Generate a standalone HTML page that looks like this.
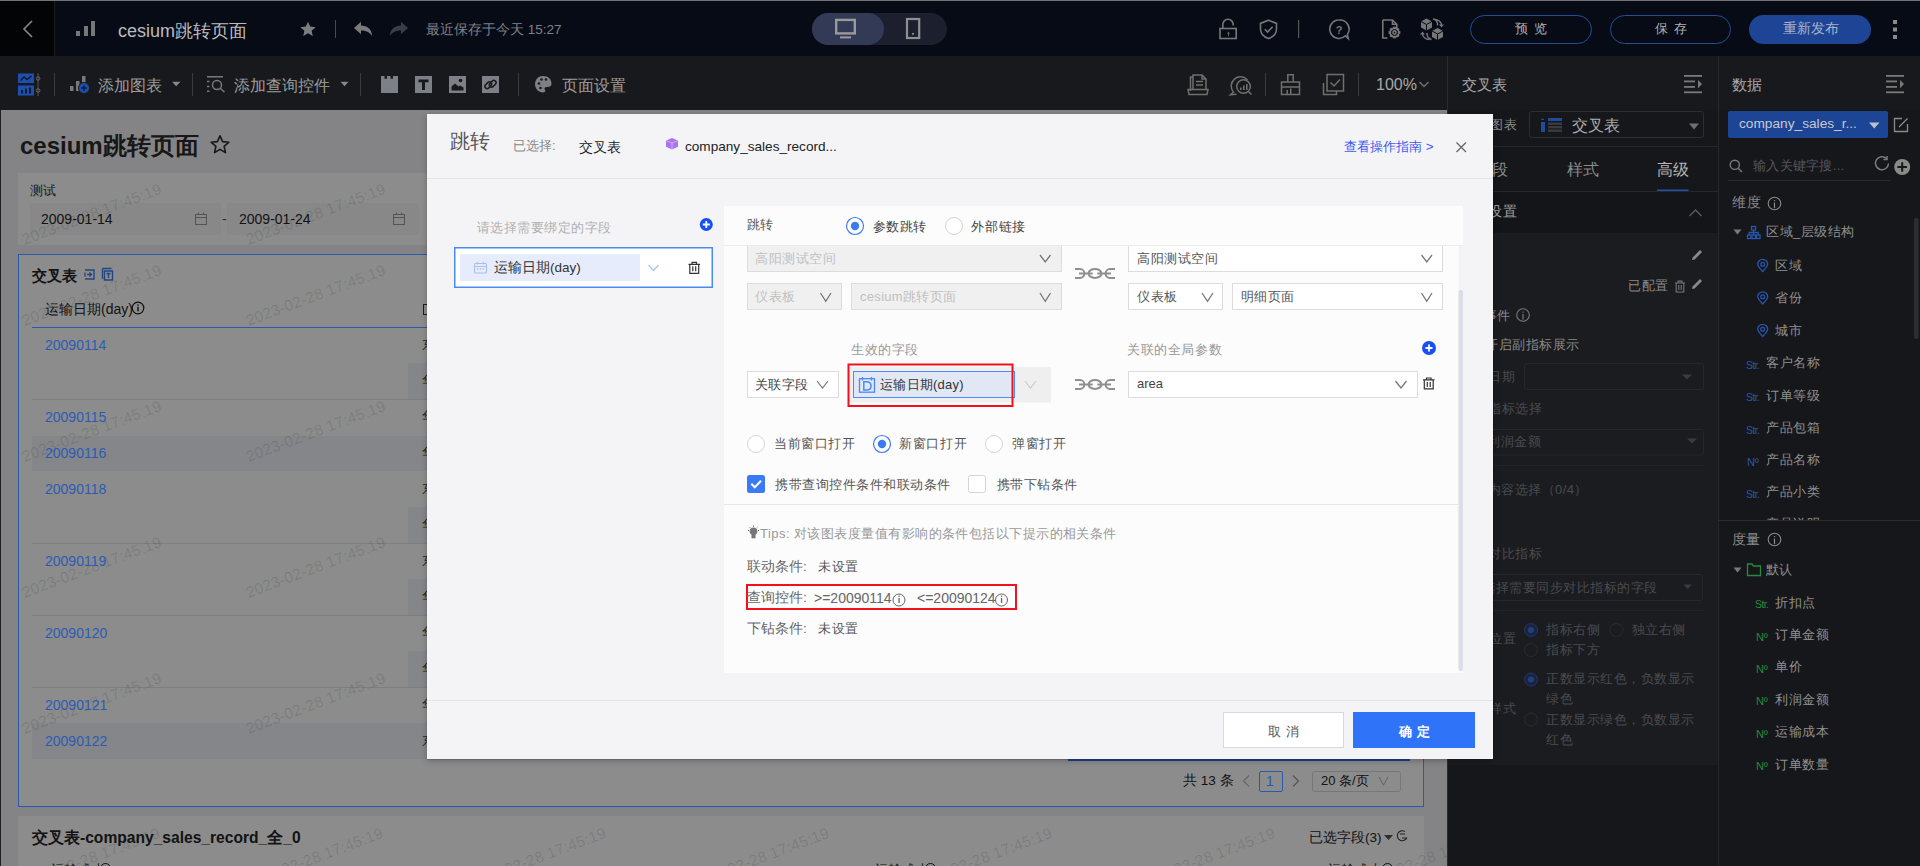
<!DOCTYPE html>
<html><head><meta charset="utf-8">
<style>
*{box-sizing:border-box;margin:0;padding:0}
html,body{width:1920px;height:866px;overflow:hidden;background:#18191c;font-family:"Liberation Sans",sans-serif;font-size:14px}
.a{position:absolute}
.t{position:absolute;white-space:nowrap;line-height:20px}
#hdr{left:0;top:0;width:1920px;height:56px;background:#070b16;border-top:1px solid #737373}
#tb{left:0;top:56px;width:1920px;height:54px;background:#18191c}
#canvas{left:0;top:110px;width:1448px;height:756px;background:#f0f1f4;overflow:hidden}
#mask{left:0;top:110px;width:1448px;height:756px;background:rgba(0,0,0,0.45)}
#p1{left:1447px;top:110px;width:271px;height:756px;background:#16171a;border-left:1px solid #2a2b2f}
#p2{left:1718px;top:110px;width:202px;height:756px;background:#16171a;border-left:1px solid #2a2b2f}
#modal{left:427px;top:114px;width:1066px;height:645px;background:#f4f4f7;box-shadow:0 2px 6px rgba(0,0,0,0.25)}
</style></head><body>
<div id="hdr" class="a">
  <div class="a" style="left:0;top:0;width:55px;height:55px;background:#030406;border-right:1px solid #1e1e1e"></div>
  <svg class="a" style="left:0;top:-1px" width="1920" height="56" viewBox="0 0 1920 56">
    <path d="M32 21 L24 29 L32 37" fill="none" stroke="#8a8a8a" stroke-width="1.6"/>
    <rect x="76" y="31" width="4" height="5" fill="#777"/><rect x="84" y="26" width="4" height="10" fill="#777"/><rect x="91" y="21" width="4" height="15" fill="#777"/>
    <path d="M308 21.8 L310.2 26.6 L315.6 27.2 L311.6 30.8 L312.8 36 L308 33.3 L303.2 36 L304.4 30.8 L300.4 27.2 L305.8 26.6Z" fill="#7d7d7d"/>
    <rect x="335" y="20" width="1" height="18" fill="#4a4a4a"/>
    <path d="M354 28 L361 21.8 L361 25.5 C367 25.5 372 29 372 36 C369.5 32 366 30.5 361 30.5 L361 34.2Z" fill="#7a7a7a"/>
    <path d="M408 28 L401 21.8 L401 25.5 C395 25.5 390 29 390 36 C392.5 32 396 30.5 401 30.5 L401 34.2Z" fill="#3a3d46"/>
    <rect x="812" y="13" width="135" height="32" rx="16" fill="#1b1f2e"/>
    <rect x="812" y="13" width="72" height="32" rx="16" fill="#333a55"/>
    <rect x="836.2" y="19.9" width="18.6" height="13.5" fill="none" stroke="#9a9a9a" stroke-width="2.4"/>
    <rect x="840" y="36.4" width="11" height="2" fill="#9a9a9a"/>
    <rect x="907" y="19" width="12.2" height="19" fill="none" stroke="#8f8f8f" stroke-width="2.2"/>
    <circle cx="913" cy="33.8" r="1.1" fill="#8f8f8f"/>
    <g fill="none" stroke="#777" stroke-width="1.6">
      <rect x="1220" y="28.5" width="16.2" height="10" />
      <path d="M1222.8 28.5 V24.5 a5.2 5.2 0 0 1 10.4 0 V25.5"/>
      <path d="M1268.5 20.2 L1276.5 23.4 V29 C1276.5 34 1273 37 1268.5 38.6 C1264 37 1260.5 34 1260.5 29 V23.4Z"/>
      <path d="M1264.8 29.2 L1267.6 32 L1272.6 26.8"/>
      <path d="M1339 20 a9.2 9.2 0 1 0 6.4 15.8 l2.8 2.6 l-0.8 -4 a9.2 9.2 0 0 0 -8.4 -14.4Z"/>
      <path d="M1382.8 20 H1392.5 L1396.8 24.3 V28 M1392.5 20 V24.3 H1396.8 M1382.8 20 V38 H1387.5"/>
      <circle cx="1394.5" cy="32.5" r="4.4"/><circle cx="1394.5" cy="32.5" r="1.6"/>
      <path d="M1433 18.8 a6 6 0 0 1 4.5 6.5 M1431.5 39.5 a6 6 0 0 1 -4.5 -6.5"/>
    </g>
    <rect x="1236" y="29" width="0.01" height="0.01"/>
    <path d="M1228.5 31.5 l-1.2 2.2 h0.8 v2.5 h0.8 v-2.5 h0.8 z" fill="#777"/>
    <rect x="1298" y="20" width="1.2" height="18" fill="#555"/>
    <text x="1339" y="33.5" font-size="11" font-family="Liberation Sans" fill="#777" text-anchor="middle" font-weight="bold">?</text>
    <path d="M1426.5 18.5 L1432 21.5 V27.5 L1426.5 30.5 L1421 27.5 V21.5Z" fill="#777"/><path d="M1421 21.5 L1426.5 24.5 L1432 21.5 M1426.5 24.5 V30.5" fill="none" stroke="#070b16" stroke-width="1"/><path d="M1437.5 28 L1443 31.0 V37.0 L1437.5 40 L1432 37.0 V31.0Z" fill="#777"/><path d="M1432 31.0 L1437.5 34.0 L1443 31.0 M1437.5 34.0 V40" fill="none" stroke="#070b16" stroke-width="1"/><g fill="none" stroke="#777" stroke-width="1.4"><path d="M1434.5 19.5 C1438.5 19.5 1441.5 22 1441.5 25.5"/><path d="M1429.5 39.5 C1425.5 39.5 1422.5 37 1422.5 33.5"/></g><path d="M1439 24.5 L1441.5 27.5 L1444 24.5Z M1420 34.5 L1422.5 31.5 L1425 34.5Z" fill="#777"/>
    <g fill="#777"><rect x="1393.2" y="26.6" width="2.6" height="2.6" transform="rotate(0 1394.5 32.5)"/><rect x="1393.2" y="26.6" width="2.6" height="2.6" transform="rotate(45 1394.5 32.5)"/><rect x="1393.2" y="26.6" width="2.6" height="2.6" transform="rotate(90 1394.5 32.5)"/><rect x="1393.2" y="26.6" width="2.6" height="2.6" transform="rotate(135 1394.5 32.5)"/><rect x="1393.2" y="26.6" width="2.6" height="2.6" transform="rotate(180 1394.5 32.5)"/><rect x="1393.2" y="26.6" width="2.6" height="2.6" transform="rotate(225 1394.5 32.5)"/><rect x="1393.2" y="26.6" width="2.6" height="2.6" transform="rotate(270 1394.5 32.5)"/><rect x="1393.2" y="26.6" width="2.6" height="2.6" transform="rotate(315 1394.5 32.5)"/></g>
    <rect x="1470.5" y="15.5" width="121" height="28" rx="14" fill="none" stroke="#264b99"/>
    <rect x="1610.5" y="15.5" width="120" height="28" rx="14" fill="none" stroke="#264b99"/>
    <rect x="1749" y="15" width="122" height="29" rx="14.5" fill="#1e4595"/>
    <g fill="#8a8a8a"><rect x="1893" y="20" width="4" height="4"/><rect x="1893" y="27.5" width="4" height="4"/><rect x="1893" y="35" width="4" height="4"/></g>
  </svg>
  <div class="t" style="left:118px;top:19px;font-size:18px;line-height:22px;color:#bcbcbc">cesium跳转页面</div>
  <div class="t" style="left:426px;top:19px;font-size:13.5px;line-height:20px;color:#7f8087">最近保存于今天 15:27</div>
  <div class="t" style="left:1515px;top:18px;font-size:13px;line-height:20px;color:#b0b0b0;letter-spacing:6px">预览</div>
  <div class="t" style="left:1655px;top:18px;font-size:13px;line-height:20px;color:#b0b0b0;letter-spacing:6px">保存</div>
  <div class="t" style="left:1783px;top:18px;font-size:13.5px;line-height:20px;color:#a8b4cc">重新发布</div>
</div>
<div id="tb" class="a">
  <svg class="a" style="left:0;top:-56px" width="1920" height="110" viewBox="0 0 1920 110">
    <rect x="18" y="73.5" width="16" height="9.5" fill="#1f4fae"/>
    <path d="M20.5 80.5 L24 77 L27 79.5 L31.5 76" fill="none" stroke="#0f1a30" stroke-width="1.5"/>
    <rect x="18" y="85.5" width="16" height="10" fill="#1f4fae"/>
    <g fill="#0f1a30"><rect x="21" y="90" width="2" height="3.5"/><rect x="25" y="88.5" width="2" height="5"/><rect x="29" y="87.5" width="2" height="6"/></g>
    <rect x="37.6" y="73" width="1" height="23" fill="#555"/>
    <circle cx="38.1" cy="78.5" r="1.8" fill="none" stroke="#666" stroke-width="1"/>
    <circle cx="38.1" cy="90.5" r="1.8" fill="none" stroke="#666" stroke-width="1"/>
    <rect x="54" y="73" width="1" height="23" fill="#3a3b3f"/>
    <g fill="#7a7a7a"><rect x="70" y="86" width="3.5" height="5"/><rect x="76" y="81" width="3.5" height="10"/><rect x="82" y="76" width="3.5" height="15"/></g>
    <circle cx="84" cy="88" r="5.5" fill="#1f4fae" stroke="#18191c" stroke-width="1"/>
    <path d="M84 85.2 V90.8 M81.2 88 H86.8" stroke="#0f1a30" stroke-width="1.5"/>
    <path d="M172 81.8 H180.4 L176.2 86.2Z" fill="#888"/>
    <rect x="192" y="73" width="1" height="23" fill="#3a3b3f"/>
    <g fill="none" stroke="#7a7a7a" stroke-width="1.5">
      <path d="M207 76.8 H223 M207 81.5 H209.5 M207 86.5 H209.5 M207 91.3 H209.5"/>
      <circle cx="217" cy="85" r="4.5"/><path d="M220.3 88.3 L224.5 92.3"/>
    </g>
    <path d="M340.5 81.8 H348.5 L344.5 86.2Z" fill="#888"/>
    <rect x="360" y="73" width="1" height="23" fill="#3a3b3f"/>
    <path d="M381 76 H384.5 V78.8 H387 V76 H390.5 V78.8 H393 V76 H398 V93 H381Z" fill="#7e8087"/>
    <rect x="415" y="76" width="17" height="17" fill="#7e8087"/>
    <path d="M418.5 79.5 H428.5 V82.3 H425 V90 H422 V82.3 H418.5Z" fill="#18191c"/>
    <rect x="449" y="76" width="17" height="17" fill="#7e8087"/>
    <path d="M451.5 90.5 V86.5 L455 83.5 L458.5 86.5 L460 85.5 L463.5 87.5 V90.5Z" fill="#18191c"/><circle cx="460.5" cy="80.5" r="1.8" fill="#18191c"/>
    <rect x="482" y="76" width="17" height="17" fill="#7e8087"/>
    <g fill="none" stroke="#18191c" stroke-width="1.5"><rect x="484.5" y="83" width="7.5" height="4.5" rx="2.25" transform="rotate(-45 488.25 85.25)"/><rect x="489" y="81.5" width="7.5" height="4.5" rx="2.25" transform="rotate(-45 492.75 83.75)"/></g>
    <rect x="518" y="73" width="1" height="23" fill="#3a3b3f"/>
    <path d="M543 76 C548.5 76 551.5 79.5 551.5 83.5 C551.5 87 548.5 87 546.5 87 C544.5 87 544 88.5 545 90 C546 91.5 544.5 92.5 543 92.5 C538.5 92.5 535 88.5 535 84.2 C535 79.5 538.5 76 543 76Z" fill="#7e8087"/>
    <g fill="#18191c"><circle cx="539" cy="83.5" r="1.3"/><circle cx="541.5" cy="79.5" r="1.3"/><circle cx="546" cy="79.5" r="1.3"/><circle cx="540.5" cy="88" r="1.3"/></g>
    <g fill="none" stroke="#6f6f6f" stroke-width="1.5">
      <path d="M1190.5 91 V77 H1193 M1193 90 V75 H1202 L1206 79 V90 M1202 75 V79 H1206 M1196 81.5 H1203 M1196 85 H1203"/>
      <path d="M1188 89.5 H1208 L1207 94.5 H1189Z"/>
      <path d="M1247.5 80 A9.2 9.2 0 1 0 1233.5 92.2 L1230.5 94.8 L1236.5 94.2"/>
      <circle cx="1243.5" cy="86.5" r="6.8"/>
      <path d="M1248.5 91.5 L1251.5 94.5"/>
      <path d="M1281.5 82 H1299.5 V94.5 H1281.5Z M1287.8 82 V74.8 H1293.2 V82 M1281.5 87 H1299.5"/>
      <path d="M1323.5 83 V94.5 H1336.5 V91 M1327 80 V74.5 H1343.5 V91 H1327Z"/>
      <path d="M1330.5 82.5 L1334 86 L1340 79.5"/>
      <path d="M1419.5 82 L1424 86.5 L1428.5 82"/>
    </g>
    <g fill="#6f6f6f"><rect x="1240" y="87.5" width="1.6" height="2.5"/><rect x="1243" y="85.5" width="1.6" height="4.5"/><rect x="1246" y="84" width="1.6" height="6"/><rect x="1286.5" y="90" width="1.5" height="4.5"/><rect x="1290" y="88.5" width="1.5" height="6"/></g>
    <rect x="1265" y="73" width="1" height="23" fill="#3a3b3f"/>
    <rect x="1358" y="73" width="1" height="23" fill="#3a3b3f"/>
  </svg>
  <div class="t" style="left:98px;top:19px;font-size:16px;line-height:22px;color:#9d9d9d">添加图表</div>
  <div class="t" style="left:234px;top:19px;font-size:16px;line-height:22px;color:#9d9d9d">添加查询控件</div>
  <div class="t" style="left:562px;top:19px;font-size:16px;line-height:22px;color:#9d9d9d">页面设置</div>
  <div class="t" style="left:1376px;top:18px;font-size:16px;line-height:22px;color:#a8a8a8">100%</div>
</div>
<div id="canvas" class="a">
  <div class="a" style="left:0;top:0;width:1px;height:756px;background:#3a3a3a"></div>
  <div class="t" style="left:20px;top:21px;font-size:24px;line-height:30px;font-weight:bold;color:#2a2a2a">cesium跳转页面</div>
  <svg class="a" style="left:209px;top:24px" width="22" height="22" viewBox="0 0 22 22"><path d="M11 1.8 L13.6 7.6 L19.9 8.2 L15.1 12.4 L16.5 18.6 L11 15.4 L5.5 18.6 L6.9 12.4 L2.1 8.2 L8.4 7.6Z" fill="none" stroke="#2a2a2a" stroke-width="1.6" stroke-linejoin="round"/></svg>
  <div class="a" style="left:18px;top:63px;width:1406px;height:72px;background:#fff"></div>
  <div class="t" style="left:30px;top:71px;font-size:13px;color:#333">测试</div>
  <div class="a" style="left:30px;top:93px;width:191px;height:32px;background:#f7f7f7;border-radius:2px"></div>
  <div class="a" style="left:227px;top:93px;width:192px;height:32px;background:#f7f7f7;border-radius:2px"></div>
  <div class="t" style="left:41px;top:98px;font-size:14px;line-height:22px;color:#262626">2009-01-14</div>
  <div class="t" style="left:222px;top:98px;font-size:14px;line-height:22px;color:#555">-</div>
  <div class="t" style="left:239px;top:98px;font-size:14px;line-height:22px;color:#262626">2009-01-24</div>
  <svg class="a" style="left:0;top:0" width="1448" height="756" viewBox="0 110 1448 756">
    <g fill="none" stroke="#999" stroke-width="1"><rect x="195.5" y="214.5" width="11" height="10"/><path d="M195.5 217.5 H206.5 M198.5 212.5 V215 M203.5 212.5 V215"/>
    <rect x="393.5" y="214.5" width="11" height="10"/><path d="M393.5 217.5 H404.5 M396.5 212.5 V215 M401.5 212.5 V215"/></g>
  </svg>
  <div class="a" style="left:18px;top:144px;width:1406px;height:553px;background:#fff;border:1px solid #4a8cf8"></div>
  <div class="t" style="left:32px;top:155px;font-size:15px;line-height:22px;font-weight:bold;color:#262626">交叉表</div>
  <svg class="a" style="left:0;top:0" width="1448" height="756" viewBox="0 110 1448 756">
    <g fill="none" stroke="#3f7ef0" stroke-width="1.4"><path d="M85 270 H94 V279 H85 M85 272.5 V276.5 M87 274.5 H91.5 M89.5 272.5 L91.5 274.5 L89.5 276.5"/>
    <path d="M102.5 268.5 H111.5 M102.5 268.5 V279 M104.5 271 H112.5 V280 H104.5Z M106.5 273.5 H110.5 M108.5 273.5 V278"/></g>
  </svg>
  <div class="t" style="left:45px;top:189px;font-size:14px;color:#262626">运输日期(day)</div>
  <svg class="a" style="left:131px;top:191px" width="14" height="14" viewBox="0 0 14 14"><circle cx="7" cy="7" r="5.8" fill="none" stroke="#1a1a1a" stroke-width="1.2"/><rect x="6.3" y="5.8" width="1.4" height="4.6" fill="#1a1a1a"/><rect x="6.3" y="3.4" width="1.4" height="1.4" fill="#1a1a1a"/></svg>
  <div class="a" style="left:32px;top:217px;width:1392px;height:1px;background:#3f7ef0"></div>
  <div class="a" style="left:32px;top:289px;width:1380px;height:1px;background:#e5e5e5"></div>
  <div class="a" style="left:32px;top:326px;width:1380px;height:35px;background:#f2f5fc"></div>
  <div class="a" style="left:32px;top:433px;width:1380px;height:1px;background:#e5e5e5"></div>
  <div class="a" style="left:32px;top:505px;width:1380px;height:1px;background:#e5e5e5"></div>
  <div class="a" style="left:32px;top:577px;width:1380px;height:1px;background:#e5e5e5"></div>
  <div class="a" style="left:32px;top:613px;width:1380px;height:36px;background:#f2f5fc"></div>
  <div class="a" style="left:408px;top:253px;width:30px;height:36px;background:#f2f5fc"></div>
  <div class="a" style="left:408px;top:397px;width:30px;height:36px;background:#f2f5fc"></div>
  <div class="a" style="left:408px;top:469px;width:30px;height:36px;background:#f2f5fc"></div>
  <div class="a" style="left:408px;top:541px;width:30px;height:36px;background:#f2f5fc"></div>
  
  
  <div class="t" style="left:1183px;top:661px;font-size:13.5px;color:#262626">共 13 条</div>
  <svg class="a" style="left:0;top:0" width="1448" height="756" viewBox="0 110 1448 756">
    <path d="M1249 775.5 L1243.5 781 L1249 786.5" fill="none" stroke="#bbb" stroke-width="1.2"/>
    
    <path d="M1293 775.5 L1298.5 781 L1293 786.5" fill="none" stroke="#999" stroke-width="1.2"/>
    <rect x="1312.5" y="771.5" width="88" height="20" rx="2" fill="none" stroke="#d9d9d9"/>
    <path d="M1379 777 L1383.5 785 L1388 777" fill="none" stroke="#bbb" stroke-width="1.1"/>
  </svg>
  
  <div class="t" style="left:1321px;top:661px;font-size:13px;color:#262626">20 条/页</div>
  <div class="a" style="left:18px;top:706px;width:1406px;height:60px;background:#fff"></div>
  <div class="t" style="left:32px;top:717px;font-size:15.6px;line-height:22px;font-weight:bold;color:#262626">交叉表-company_sales_record_全_0</div>
  <div class="t" style="left:1309px;top:718px;font-size:13.5px;color:#262626">已选字段(3)</div>
  <svg class="a" style="left:0;top:0" width="1448" height="756" viewBox="0 110 1448 756">
    <path d="M1384 835 H1393 L1388.5 840Z" fill="#555"/>
    <g fill="none" stroke="#444" stroke-width="1.1"><path d="M1405 831.5 a5 5 0 1 0 2 6 M1400 834 h5 M1402 838 h5"/></g>
  </svg>
  <svg class="a" style="left:0;top:0;font-family:'Liberation Sans';font-size:15.5px;letter-spacing:0.2px;fill:rgba(0,0,0,0.12)" width="1448" height="756" viewBox="0 110 1448 756"><text x="24.5" y="245" transform="rotate(-20.5 24.5 245)">2023-02-28 17:45:19</text><text x="248.5" y="245" transform="rotate(-20.5 248.5 245)">2023-02-28 17:45:19</text><text x="24.5" y="326" transform="rotate(-20.5 24.5 326)">2023-02-28 17:45:19</text><text x="248.5" y="326" transform="rotate(-20.5 248.5 326)">2023-02-28 17:45:19</text><text x="24.5" y="462" transform="rotate(-20.5 24.5 462)">2023-02-28 17:45:19</text><text x="248.5" y="462" transform="rotate(-20.5 248.5 462)">2023-02-28 17:45:19</text><text x="24.5" y="598" transform="rotate(-20.5 24.5 598)">2023-02-28 17:45:19</text><text x="248.5" y="598" transform="rotate(-20.5 248.5 598)">2023-02-28 17:45:19</text><text x="24.5" y="734" transform="rotate(-20.5 24.5 734)">2023-02-28 17:45:19</text><text x="248.5" y="734" transform="rotate(-20.5 248.5 734)">2023-02-28 17:45:19</text><text x="23" y="889" transform="rotate(-20.5 23 889)">2023-02-28 17:45:19</text><text x="246" y="889" transform="rotate(-20.5 246 889)">2023-02-28 17:45:19</text><text x="469" y="889" transform="rotate(-20.5 469 889)">2023-02-28 17:45:19</text><text x="692" y="889" transform="rotate(-20.5 692 889)">2023-02-28 17:45:19</text><text x="915" y="889" transform="rotate(-20.5 915 889)">2023-02-28 17:45:19</text><text x="1138" y="889" transform="rotate(-20.5 1138 889)">2023-02-28 17:45:19</text><text x="1361" y="889" transform="rotate(-20.5 1361 889)">2023-02-28 17:45:19</text></svg>
  

<div class="t" style="left:51px;top:750px;font-size:13px;color:#262626;letter-spacing:0.5px">运输成本</div><div class="a" style="left:99.5px;top:753px;width:11px;height:11px;border:1.2px solid #1a1a1a;border-radius:50%"></div><div class="t" style="left:875px;top:750px;font-size:13px;color:#262626;letter-spacing:0.5px">运输成本</div><div class="a" style="left:925.0px;top:753px;width:11px;height:11px;border:1.2px solid #1a1a1a;border-radius:50%"></div><div class="t" style="left:1328px;top:750px;font-size:13px;color:#262626;letter-spacing:0.5px">运输成本</div><div class="a" style="left:1381.5px;top:753px;width:11px;height:11px;border:1.2px solid #1a1a1a;border-radius:50%"></div></div>
<div id="mask" class="a"></div>
<div id="ov" class="a" style="left:0;top:0;width:1448px;height:866px;overflow:hidden"><div class="a" style="left:18px;top:254px;width:1406px;height:553px;border:1px solid #2c58ad"></div><div class="a" style="left:32px;top:327px;width:1392px;height:1px;background:#2c58ad"></div><div class="t" style="left:45px;top:335px;font-size:14px;color:#2b5cb4">20090114</div><div class="t" style="left:45px;top:407px;font-size:14px;color:#2b5cb4">20090115</div><div class="t" style="left:45px;top:443px;font-size:14px;color:#2b5cb4">20090116</div><div class="t" style="left:45px;top:479px;font-size:14px;color:#2b5cb4">20090118</div><div class="t" style="left:45px;top:551px;font-size:14px;color:#2b5cb4">20090119</div><div class="t" style="left:45px;top:623px;font-size:14px;color:#2b5cb4">20090120</div><div class="t" style="left:45px;top:695px;font-size:14px;color:#2b5cb4">20090121</div><div class="t" style="left:45px;top:731px;font-size:14px;color:#2b5cb4">20090122</div><div class="a" style="left:1068px;top:759px;width:342px;height:1.5px;background:#1d3f8f"></div><div class="a" style="left:427px;top:759px;width:641px;height:1px;background:rgba(0,0,0,0.12)"></div><div class="t" style="left:422px;top:335px;font-size:13px;color:#1e1e1e">东</div><div class="t" style="left:422px;top:371px;font-size:13px;color:#1e1e1e">华</div><div class="t" style="left:422px;top:407px;font-size:13px;color:#1e1e1e">华</div><div class="t" style="left:422px;top:443px;font-size:13px;color:#1e1e1e">华</div><div class="t" style="left:422px;top:479px;font-size:13px;color:#1e1e1e">东</div><div class="t" style="left:422px;top:515px;font-size:13px;color:#1e1e1e">华</div><div class="t" style="left:422px;top:551px;font-size:13px;color:#1e1e1e">东</div><div class="t" style="left:422px;top:587px;font-size:13px;color:#1e1e1e">华</div><div class="t" style="left:422px;top:623px;font-size:13px;color:#1e1e1e">华</div><div class="t" style="left:422px;top:659px;font-size:13px;color:#1e1e1e">华</div><div class="t" style="left:422px;top:695px;font-size:13px;color:#1e1e1e">华</div><div class="t" style="left:422px;top:731px;font-size:13px;color:#1e1e1e">东</div><div class="a" style="left:423px;top:304px;width:5px;height:11px;border:1.2px solid #1e1e1e;border-right:none"></div><div class="t" style="left:1266px;top:771px;font-size:14px;color:#2c58ad">1</div><div class="a" style="left:1259px;top:771px;width:24px;height:21px;border:1px solid #2c58ad;border-radius:2px"></div></div>
<div id="p1" class="a" style="left:0;top:0;width:1920px;height:866px;background:none;border:none"><svg class="a" style="left:0;top:0" width="1920" height="866" viewBox="0 0 1920 866"><rect x="1448" y="110" width="270" height="756" fill="#16171b"/>
<rect x="1447" y="56" width="1" height="810" fill="#2a2b2f"/>
<rect x="1718" y="56" width="1" height="810" fill="#27282c"/>
<g fill="#7a7a7a"><rect x="1684" y="75" width="18" height="1.8"/><rect x="1684" y="80.5" width="11" height="1.8"/><rect x="1684" y="86" width="11" height="1.8"/><rect x="1684" y="91.4" width="18" height="1.8"/><path d="M1698 80 L1702 84.1 L1698 88.2Z"/></g>
<g fill="#7a7a7a"><rect x="1886" y="75" width="18" height="1.8"/><rect x="1886" y="80.5" width="11" height="1.8"/><rect x="1886" y="86" width="11" height="1.8"/><rect x="1886" y="91.4" width="18" height="1.8"/><path d="M1900 80 L1904 84.1 L1900 88.2Z"/></g>
<rect x="1529.5" y="111.5" width="174" height="26" rx="2" fill="#16171b" stroke="#2d2e33"/>
<g fill="#1f4a9e"><rect x="1541" y="122" width="4" height="10"/><rect x="1548" y="118" width="14" height="3"/></g><g fill="#3a3b40"><rect x="1548" y="122.5" width="14" height="2.4"/><rect x="1548" y="126" width="14" height="2.4"/><rect x="1548" y="129.5" width="14" height="2.4"/></g><path d="M1541 120 a1.6 1.6 0 0 1 3.2 0Z" fill="#1f4a9e"/>
<path d="M1689 123.5 H1699 L1694.0 129.5Z" fill="#6e6f75"/>
<rect x="1448" y="146" width="270" height="1" fill="#26272b"/>
<rect x="1657" y="189.5" width="31.5" height="2.5" fill="#2250b0"/>
<rect x="1448" y="191" width="270" height="1" fill="#26272b"/>
<rect x="1448" y="192" width="270" height="41" fill="#141519"/>
<path d="M1689.5 216 L1695.5 210 L1701.5 216" fill="none" stroke="#5a5b60" stroke-width="1.3"/>
<rect x="1448" y="233" width="270" height="532" fill="#1b1c20"/>
<path d="M1692 260.0 L1692.6 257.5 L1700 250.1 L1702 252.1 L1694.6 259.5Z" fill="#8a8a8a"/>
<g fill="none" stroke="#777" stroke-width="1.1"><path d="M1675 283.0 H1685 M1678 283.0 V281.1 H1682 V283.0 M1676.2 283.0 V292.0 H1683.8 V283.0 M1678.8 285.0 V290.0 M1681.2 285.0 V290.0"/></g>
<path d="M1692 289.0 L1692.6 286.5 L1700 279.1 L1702 281.1 L1694.6 288.5Z" fill="#8a8a8a"/>
<circle cx="1523" cy="315" r="6.3" fill="none" stroke="#7a7a7a" stroke-width="1.1"/><rect x="1522.4" y="314" width="1.2" height="5.67" fill="#7a7a7a"/><rect x="1522.4" y="311.535" width="1.2" height="1.2" fill="#7a7a7a"/>
<rect x="1524.5" y="363.5" width="179" height="26" rx="2" fill="none" stroke="#26272b"/>
<path d="M1682 374.5 H1692 L1687.0 379.5Z" fill="#3a3b40"/>
<rect x="1490" y="429.5" width="213.5" height="25.5" rx="2" fill="none" stroke="#26272b"/>
<path d="M1687 438.5 H1697 L1692.0 443.5Z" fill="#3a3b40"/>
<rect x="1490" y="465" width="213" height="1" fill="#222327"/>
<rect x="1490" y="574.5" width="212.5" height="26" rx="2" fill="none" stroke="#26272b"/>
<path d="M1683.5 584.5 H1692 L1687.75 589Z" fill="#3a3b40"/>
<rect x="1490" y="610" width="213" height="1" fill="#222327"/>
<circle cx="1531" cy="630" r="6.5" fill="#1a2440" stroke="#1f3668" stroke-width="1"/><circle cx="1531" cy="630" r="3" fill="#23407d"/>
<circle cx="1616.5" cy="630" r="6.5" fill="none" stroke="#2a2b2f" stroke-width="1"/>
<circle cx="1531" cy="650" r="6.5" fill="none" stroke="#2a2b2f" stroke-width="1"/>
<circle cx="1531" cy="679.5" r="6.5" fill="#1a2440" stroke="#1f3668" stroke-width="1"/><circle cx="1531" cy="679.5" r="3" fill="#23407d"/>
<circle cx="1531" cy="719.5" r="6.5" fill="none" stroke="#2a2b2f" stroke-width="1"/>
<rect x="1719" y="110" width="201" height="756" fill="#16171b"/>
<rect x="1728" y="111" width="160" height="27" rx="2" fill="#1d4595"/>
<path d="M1869 122.5 H1879.5 L1874.25 128.5Z" fill="#b8c0d0"/>
<g fill="none" stroke="#8a8a8a" stroke-width="1.3"><path d="M1902 118.5 H1894.5 V131.5 H1907.5 V124"/><path d="M1899 127 L1907.5 118.5"/></g>
<g fill="none" stroke="#7a7a7a" stroke-width="1.4"><circle cx="1734.8" cy="164.8" r="4.6"/><path d="M1738.2 168.2 L1742 172"/></g>
<g fill="none" stroke="#7a7a7a" stroke-width="1.5"><path d="M1888.5 163.5 a6.5 6.5 0 1 1 -2 -5"/><path d="M1887 156 V159.5 H1883.5"/></g>
<circle cx="1902.2" cy="167" r="8" fill="#8a8a8a"/><path d="M1902.2 162.2 V171.8 M1897.4 167 H1907" stroke="#16171b" stroke-width="2"/>
<rect x="1728" y="180" width="162" height="1" fill="#2a2b2f"/>
<circle cx="1774.5" cy="203.5" r="6.3" fill="none" stroke="#8a8a8a" stroke-width="1.1"/><rect x="1773.9" y="202.5" width="1.2" height="5.67" fill="#8a8a8a"/><rect x="1773.9" y="200.035" width="1.2" height="1.2" fill="#8a8a8a"/>
<path d="M1733.5 229.5 H1741.5 L1737.5 234.5Z" fill="#7a7a7a"/>
<g fill="none" stroke="#2a55b0" stroke-width="1.3"><rect x="1751.5" y="226.5" width="4" height="3.5"/><rect x="1747.5" y="235" width="3.5" height="3.5"/><rect x="1752" y="235" width="3.5" height="3.5"/><rect x="1756.5" y="235" width="3.5" height="3.5"/><path d="M1753.5 230 V235 M1749.2 235 V232.5 H1758.2 V235"/></g>
<g fill="none" stroke="#2a55b0" stroke-width="1.3"><path d="M1762.7 271.5 C1759 267.5 1757.7 265.8 1757.7 264.3 a5 5 0 0 1 10 0 C1767.7 265.8 1766.4 267.5 1762.7 271.5Z"/><circle cx="1762.7" cy="264.3" r="1.9"/></g>
<g fill="none" stroke="#2a55b0" stroke-width="1.3"><path d="M1762.7 304.0 C1759 300.0 1757.7 298.3 1757.7 296.8 a5 5 0 0 1 10 0 C1767.7 298.3 1766.4 300.0 1762.7 304.0Z"/><circle cx="1762.7" cy="296.8" r="1.9"/></g>
<g fill="none" stroke="#2a55b0" stroke-width="1.3"><path d="M1762.7 336.5 C1759 332.5 1757.7 330.8 1757.7 329.3 a5 5 0 0 1 10 0 C1767.7 330.8 1766.4 332.5 1762.7 336.5Z"/><circle cx="1762.7" cy="329.3" r="1.9"/></g>
<rect x="1914" y="218" width="4.5" height="121" rx="2" fill="#2c2d31"/>
<rect x="1719" y="520" width="201" height="1" fill="#2a2b2f"/>
<circle cx="1774.5" cy="539.5" r="6.3" fill="none" stroke="#8a8a8a" stroke-width="1.1"/><rect x="1773.9" y="538.5" width="1.2" height="5.67" fill="#8a8a8a"/><rect x="1773.9" y="536.035" width="1.2" height="1.2" fill="#8a8a8a"/>
<path d="M1733.5 567.5 H1741.5 L1737.5 572.5Z" fill="#7a7a7a"/>
<path d="M1747.5 564 H1752 L1753.5 566 H1760.5 V575.5 H1747.5Z" fill="none" stroke="#2a8a3a" stroke-width="1.3"/></svg><div class="t" style="left:1462px;top:74px;font-size:15px;color:#a8a8a8;line-height:22px">交叉表</div>
<div class="t" style="left:1732px;top:74px;font-size:15px;color:#a8a8a8;line-height:22px">数据</div>
<div class="t" style="left:1490px;top:115px;font-size:13px;color:#8a8a8a;letter-spacing:0.5px">图表</div>
<div class="t" style="left:1572px;top:115px;font-size:16px;color:#b0b0b0;line-height:22px">交叉表</div>
<div class="t" style="left:1492px;top:159px;font-size:16px;color:#8a8a8a;line-height:22px">段</div>
<div class="t" style="left:1567px;top:159px;font-size:16px;color:#8a8a8a;line-height:22px">样式</div>
<div class="t" style="left:1657px;top:159px;font-size:16px;color:#b5b5b5;line-height:22px">高级</div>
<div class="t" style="left:1488px;top:202px;font-size:13.5px;color:#a0a0a0;letter-spacing:0.5px">设置</div>
<div class="t" style="left:1628px;top:276px;font-size:13px;color:#8a8a8a;letter-spacing:0.5px">已配置</div>
<div class="t" style="left:1484px;top:305.5px;font-size:13px;color:#8a8a8a;">事件</div>
<div class="t" style="left:1485px;top:335px;font-size:13px;color:#8a8a8a;letter-spacing:0.5px">开启副指标展示</div>
<div class="t" style="left:1488px;top:366.5px;font-size:13px;color:#4a4b4f;letter-spacing:0.5px">日期</div>
<div class="t" style="left:1488px;top:399px;font-size:13px;color:#4a4b4f;letter-spacing:0.5px">指标选择</div>
<div class="t" style="left:1487px;top:431.5px;font-size:13px;color:#4a4b4f;letter-spacing:0.5px">利润金额</div>
<div class="t" style="left:1488px;top:480px;font-size:13px;color:#4a4b4f;letter-spacing:0.4px">内容选择（0/4）</div>
<div class="t" style="left:1488px;top:544px;font-size:13px;color:#4a4b4f;letter-spacing:0.5px">对比指标</div>
<div class="t" style="left:1482px;top:577.5px;font-size:13px;color:#4a4b4f;letter-spacing:0.5px">选择需要同步对比指标的字段</div>
<div class="t" style="left:1489px;top:629px;font-size:13px;color:#4a4b4f;letter-spacing:0.5px">位置</div>
<div class="t" style="left:1546px;top:620px;font-size:13px;color:#4a4b4f;letter-spacing:0.5px">指标右侧</div>
<div class="t" style="left:1631.5px;top:620px;font-size:13px;color:#4a4b4f;letter-spacing:0.5px">独立右侧</div>
<div class="t" style="left:1546px;top:640px;font-size:13px;color:#4a4b4f;letter-spacing:0.5px">指标下方</div>
<div class="t" style="left:1489px;top:699px;font-size:13px;color:#4a4b4f;letter-spacing:0.5px">样式</div>
<div class="t" style="left:1546px;top:669px;font-size:13px;color:#4a4b4f;letter-spacing:0.5px">正数显示红色，负数显示</div>
<div class="t" style="left:1546px;top:689px;font-size:13px;color:#4a4b4f;letter-spacing:0.5px">绿色</div>
<div class="t" style="left:1546px;top:709.5px;font-size:13px;color:#4a4b4f;letter-spacing:0.5px">正数显示绿色，负数显示</div>
<div class="t" style="left:1546px;top:730px;font-size:13px;color:#4a4b4f;letter-spacing:0.5px">红色</div>
<div class="t" style="left:1739px;top:114px;font-size:13.7px;color:#c4c8d4;">company_sales_r...</div>
<div class="t" style="left:1753px;top:156px;font-size:13px;color:#55565b;letter-spacing:0.3px">输入关键字搜...</div>
<div class="t" style="left:1732px;top:193px;font-size:13.5px;color:#8a8a8a;letter-spacing:0.5px">维度</div>
<div class="t" style="left:1766px;top:222px;font-size:13px;color:#909090;letter-spacing:0.5px">区域_层级结构</div>
<div class="t" style="left:1775px;top:255.5px;font-size:13px;color:#909090;letter-spacing:0.5px">区域</div>
<div class="t" style="left:1775px;top:288px;font-size:13px;color:#909090;letter-spacing:0.5px">省份</div>
<div class="t" style="left:1775px;top:320.5px;font-size:13px;color:#909090;letter-spacing:0.5px">城市</div>
<div class="t" style="left:1766px;top:353px;font-size:13px;color:#909090;letter-spacing:0.5px">客户名称</div>
<div class="t" style="left:1746px;top:354.5px;font-size:10.5px;color:#2a55b0;letter-spacing:-0.6px">Str.</div>
<div class="t" style="left:1766px;top:385.5px;font-size:13px;color:#909090;letter-spacing:0.5px">订单等级</div>
<div class="t" style="left:1746px;top:387.0px;font-size:10.5px;color:#2a55b0;letter-spacing:-0.6px">Str.</div>
<div class="t" style="left:1766px;top:418px;font-size:13px;color:#909090;letter-spacing:0.5px">产品包箱</div>
<div class="t" style="left:1746px;top:419.5px;font-size:10.5px;color:#2a55b0;letter-spacing:-0.6px">Str.</div>
<div class="t" style="left:1766px;top:450px;font-size:13px;color:#909090;letter-spacing:0.5px">产品名称</div>
<div class="t" style="left:1747.0px;top:451.5px;font-size:11px;color:#2a55b0;letter-spacing:-0.2px">Nº</div>
<div class="t" style="left:1766px;top:482px;font-size:13px;color:#909090;letter-spacing:0.5px">产品小类</div>
<div class="t" style="left:1746px;top:483.5px;font-size:10.5px;color:#2a55b0;letter-spacing:-0.6px">Str.</div>
<div class="a" style="left:1719px;top:510px;width:190px;height:10px;overflow:hidden"><div class="t" style="left:47px;top:4px;font-size:13px;color:#909090;letter-spacing:0.5px">产品说明</div></div>
<div class="t" style="left:1731.5px;top:529.5px;font-size:13.5px;color:#8a8a8a;letter-spacing:0.5px">度量</div>
<div class="t" style="left:1765.5px;top:559.5px;font-size:13px;color:#909090;letter-spacing:0.5px">默认</div>
<div class="t" style="left:1775px;top:592.5px;font-size:13px;color:#909090;letter-spacing:0.5px">折扣点</div>
<div class="t" style="left:1755px;top:594.0px;font-size:10.5px;color:#2a8a3a;letter-spacing:-0.6px">Str.</div>
<div class="t" style="left:1775px;top:625px;font-size:13px;color:#909090;letter-spacing:0.5px">订单金额</div>
<div class="t" style="left:1756.0px;top:626.5px;font-size:11px;color:#2a8a3a;letter-spacing:-0.2px">Nº</div>
<div class="t" style="left:1775px;top:657px;font-size:13px;color:#909090;letter-spacing:0.5px">单价</div>
<div class="t" style="left:1756.0px;top:658.5px;font-size:11px;color:#2a8a3a;letter-spacing:-0.2px">Nº</div>
<div class="t" style="left:1775px;top:689.5px;font-size:13px;color:#909090;letter-spacing:0.5px">利润金额</div>
<div class="t" style="left:1756.0px;top:691.0px;font-size:11px;color:#2a8a3a;letter-spacing:-0.2px">Nº</div>
<div class="t" style="left:1775px;top:722px;font-size:13px;color:#909090;letter-spacing:0.5px">运输成本</div>
<div class="t" style="left:1756.0px;top:723.5px;font-size:11px;color:#2a8a3a;letter-spacing:-0.2px">Nº</div>
<div class="t" style="left:1775px;top:754.5px;font-size:13px;color:#909090;letter-spacing:0.5px">订单数量</div>
<div class="t" style="left:1756.0px;top:756.0px;font-size:11px;color:#2a8a3a;letter-spacing:-0.2px">Nº</div></div>
<div id="modal" class="a"></div><div class="a" style="left:0;top:0;width:1920px;height:866px;overflow:hidden"><svg class="a" style="left:0;top:0" width="1920" height="866" viewBox="0 0 1920 866"><line x1="427" y1="178.5" x2="1493" y2="178.5" stroke="#e3e4ea"/>
<path d="M666 140.5 L672 138 L678 140.5 V146.8 L672 149.4 L666 146.8Z" fill="#a774f2"/><path d="M666 140.5 L672 143 L678 140.5 M672 143 V149.4" stroke="#d9c4fb" stroke-width="0.8" fill="none"/>
<path d="M1456.5 142.5 L1466 152 M1466 142.5 L1456.5 152" stroke="#666" stroke-width="1.3"/>
<circle cx="706.3" cy="224.5" r="6.5" fill="#1650f5"/><path d="M706.3 221.0 V228.0 M702.8 224.5 H709.8" stroke="#fff" stroke-width="1.8"/>
<rect x="454.75" y="247.75" width="257.5" height="39.5" fill="#fff" stroke="#4a8af4" stroke-width="1.5"/>
<rect x="460" y="254" width="180" height="27" fill="#e6ecfb"/>
<g fill="none" stroke="#a9bff0" stroke-width="1.1"><rect x="474.5" y="263.5" width="12" height="9.5" rx="1"/><path d="M474.5 266.5 H486.5 M477.5 262 V264.5 M483.5 262 V264.5"/></g><g fill="#a9bff0"><rect x="477" y="268.2" width="1.5" height="1.3"/><rect x="479.8" y="268.2" width="1.5" height="1.3"/><rect x="482.6" y="268.2" width="1.5" height="1.3"/></g>
<path d="M648.5 265 L653.5 270.5 L658.5 265" fill="none" stroke="#a9c3f5" stroke-width="1.2"/>
<g fill="none" stroke="#333" stroke-width="1.2"><path d="M688.5 264.3 H700.0 M692.0 264.3 V262.40000000000003 H696.5 V264.3 M689.8 264.3 V273.3 H698.7 V264.3 M692.8 266.3 V271.3 M695.7 266.3 V271.3"/></g>
<rect x="724" y="206" width="739" height="467" fill="#fcfcfc"/>
<line x1="724" y1="245.5" x2="1463" y2="245.5" stroke="#ececec"/>
<circle cx="855" cy="226" r="8.5" fill="#fff" stroke="#3a7af5" stroke-width="1.2"/><circle cx="855" cy="226" r="4.2" fill="#3a7af5"/>
<circle cx="954" cy="226" r="8.5" fill="#fff" stroke="#d4d4d4" stroke-width="1"/>
<rect x="1458.5" y="246" width="4.5" height="425" fill="#f3f3f6"/><rect x="1458.5" y="290" width="4.5" height="381" rx="2" fill="#dcdde6"/>
<svg x="724" y="246" width="734" height="427" viewBox="724 246 734 427" overflow="hidden">
<rect x="747.5" y="244.5" width="314" height="27" fill="#f0f0f0" stroke="#dcdcdc"/>
<path d="M1040 255 L1045.25 262 L1050.5 255" fill="none" stroke="#777" stroke-width="1.3"/>
<rect x="747.5" y="283.5" width="94" height="26" fill="#f0f0f0" stroke="#dcdcdc"/>
<path d="M820.5 293 L825.75 301.3 L831 293" fill="none" stroke="#777" stroke-width="1.3"/>
<rect x="851.5" y="283.5" width="210" height="26" fill="#f0f0f0" stroke="#dcdcdc"/>
<path d="M1040 293 L1045.25 301.3 L1050.5 293" fill="none" stroke="#777" stroke-width="1.3"/>
<g fill="none" stroke="#8f8f8f"><g stroke-width="2"><path d="M1075 269.1 H1080 A4.4 4.4 0 0 1 1080 277.9 H1075"/>
<ellipse cx="1095" cy="273.5" rx="6.5" ry="4.4"/>
<path d="M1115 269.1 H1110 A4.4 4.4 0 0 0 1110 277.9 H1115"/></g>
<path d="M1079 273.5 H1092.7 M1097.3 273.5 H1111" stroke-width="1.8"/></g>
<rect x="1128.5" y="244.5" width="314" height="27" fill="#fff" stroke="#dcdcdc"/>
<path d="M1421.5 255 L1426.75 262 L1432 255" fill="none" stroke="#777" stroke-width="1.3"/>
<rect x="1128.5" y="283.5" width="94" height="26" fill="#fff" stroke="#dcdcdc"/>
<path d="M1202 293 L1207.5 301.3 L1213 293" fill="none" stroke="#777" stroke-width="1.3"/>
<rect x="1232.5" y="283.5" width="210" height="26" fill="#fff" stroke="#dcdcdc"/>
<path d="M1421.5 293 L1426.75 301.3 L1432 293" fill="none" stroke="#777" stroke-width="1.3"/>
<circle cx="1429" cy="348" r="7" fill="#1650f5"/><path d="M1429 344.5 V351.5 M1425.5 348 H1432.5" stroke="#fff" stroke-width="1.8"/>
<rect x="747.5" y="371.5" width="91" height="26" fill="#fff" stroke="#dcdcdc"/>
<path d="M817 381 L822.5 388 L828 381" fill="none" stroke="#777" stroke-width="1.2"/>
<rect x="848" y="367" width="203" height="35.5" fill="#efefef"/>
<rect x="853.5" y="371.5" width="161" height="26" fill="#e1e7f5" stroke="#4b8cf5"/>
<g fill="none" stroke="#4a8af0" stroke-width="1.3"><rect x="859.5" y="378.7" width="15" height="13.5"/><path d="M862.5 377 V380.5 M871.5 377 V380.5"/></g><path d="M863.8 381.8 V390 H866.5 C869.8 390 871 388.3 871 385.9 C871 383.5 869.8 381.8 866.5 381.8Z" fill="none" stroke="#4a8af0" stroke-width="1.5"/>
<path d="M1025 381 L1030.5 388 L1036 381" fill="none" stroke="#c8c8c8" stroke-width="1.1"/>
<rect x="848.5" y="364.5" width="164" height="41.5" fill="none" stroke="#f2101c" stroke-width="2"/>
<g fill="none" stroke="#8f8f8f"><g stroke-width="2"><path d="M1075 380.1 H1080 A4.4 4.4 0 0 1 1080 388.9 H1075"/>
<ellipse cx="1095" cy="384.5" rx="6.5" ry="4.4"/>
<path d="M1115 380.1 H1110 A4.4 4.4 0 0 0 1110 388.9 H1115"/></g>
<path d="M1079 384.5 H1092.7 M1097.3 384.5 H1111" stroke-width="1.8"/></g>
<rect x="1128.5" y="371.5" width="289" height="26" fill="#fff" stroke="#dcdcdc"/>
<path d="M1395.5 381 L1401.0 388 L1406.5 381" fill="none" stroke="#777" stroke-width="1.3"/>
<g fill="none" stroke="#333" stroke-width="1.2"><path d="M1423 379.9 H1434.5 M1426.5 379.9 V378.0 H1431 V379.9 M1424.3 379.9 V388.9 H1433.2 V379.9 M1427.3 381.9 V386.9 M1430.2 381.9 V386.9"/></g>
<circle cx="756" cy="444" r="8.5" fill="#fff" stroke="#d4d4d4" stroke-width="1"/>
<circle cx="882" cy="444" r="8.5" fill="#fff" stroke="#3a7af5" stroke-width="1.2"/><circle cx="882" cy="444" r="4.2" fill="#3a7af5"/>
<circle cx="994" cy="444" r="8.5" fill="#fff" stroke="#d4d4d4" stroke-width="1"/>
<rect x="747" y="475" width="18" height="18" rx="2.5" fill="#3a7af5"/><path d="M751.3 483.8 L754.8 487.3 L761 480.8" fill="none" stroke="#fff" stroke-width="2"/>
<rect x="968.5" y="475.5" width="17" height="17" rx="2" fill="#fff" stroke="#d4d4d4"/>
<line x1="724" y1="504.5" x2="1458" y2="504.5" stroke="#e6e6e6"/>
<g fill="#777"><circle cx="753.5" cy="531.3" r="3.8"/><rect x="751.5" y="534" width="4" height="4.3"/></g><g stroke="#777" stroke-width="1"><path d="M753.5 525.5 V526.8 M748 530.5 H749 M758 530.5 H759 M749.5 527 L750.3 527.8 M757.5 527 L756.7 527.8"/></g>
<rect x="747" y="585" width="269" height="24" fill="none" stroke="#f2101c" stroke-width="2"/>
<circle cx="899" cy="600" r="6" fill="none" stroke="#666" stroke-width="1"/><rect x="898.4" y="598" width="1.3" height="5" fill="#666"/><rect x="898.4" y="595.6" width="1.3" height="1.3" fill="#666"/>
<circle cx="1001.5" cy="600" r="6" fill="none" stroke="#666" stroke-width="1"/><rect x="1000.9" y="598" width="1.3" height="5" fill="#666"/><rect x="1000.9" y="595.6" width="1.3" height="1.3" fill="#666"/>
</svg>
<line x1="427" y1="700.5" x2="1493" y2="700.5" stroke="#e3e4ea"/>
<rect x="1223.5" y="712.5" width="120" height="35" fill="#fff" stroke="#d9d9d9"/>
<rect x="1353" y="712" width="122" height="36" fill="#2f74f8"/></svg><div class="t" style="left:450px;top:129px;font-size:20px;color:#555;line-height:24px">跳转</div>
<div class="t" style="left:513px;top:136px;font-size:13px;color:#888;">已选择:</div>
<div class="t" style="left:579px;top:137px;font-size:14px;color:#222;">交叉表</div>
<div class="t" style="left:685px;top:137px;font-size:13.6px;color:#222;">company_sales_record...</div>
<div class="t" style="left:1344px;top:137px;font-size:13.4px;color:#3d5af1;">查看操作指南 &gt;</div>
<div class="t" style="left:477px;top:218px;font-size:13px;color:#b0b0b0;letter-spacing:0.44px;">请选择需要绑定的字段</div>
<div class="t" style="left:494px;top:257.5px;font-size:13.5px;color:#333;">运输日期(day)</div>
<div class="t" style="left:747px;top:215px;font-size:13px;color:#555;">跳转</div>
<div class="t" style="left:873px;top:216.5px;font-size:13px;color:#444;letter-spacing:0.4px;">参数跳转</div>
<div class="t" style="left:971px;top:216.5px;font-size:13px;color:#444;letter-spacing:0.75px;">外部链接</div>
<div class="t" style="left:755px;top:249px;font-size:13px;color:#c0c0c0;letter-spacing:0.5px;">高阳测试空间</div>
<div class="t" style="left:755px;top:286.5px;font-size:13px;color:#c0c0c0;letter-spacing:0.5px;">仪表板</div>
<div class="t" style="left:860px;top:286.5px;font-size:13px;color:#c0c0c0;letter-spacing:0.3px;">cesium跳转页面</div>
<div class="t" style="left:1137px;top:249px;font-size:13px;color:#555;letter-spacing:0.5px;">高阳测试空间</div>
<div class="t" style="left:1137px;top:286.5px;font-size:13px;color:#555;letter-spacing:0.5px;">仪表板</div>
<div class="t" style="left:1241px;top:286.5px;font-size:13px;color:#555;letter-spacing:0.3px;">明细页面</div>
<div class="t" style="left:851px;top:339.5px;font-size:13px;color:#999;letter-spacing:0.5px;">生效的字段</div>
<div class="t" style="left:1127px;top:339.5px;font-size:13px;color:#999;letter-spacing:0.6px;">关联的全局参数</div>
<div class="t" style="left:755px;top:374.5px;font-size:13px;color:#444;letter-spacing:0.3px;">关联字段</div>
<div class="t" style="left:880px;top:375px;font-size:13px;color:#333;letter-spacing:0.25px;">运输日期(day)</div>
<div class="t" style="left:1137px;top:374px;font-size:13px;color:#444;">area</div>
<div class="t" style="left:774px;top:434px;font-size:13px;color:#555;letter-spacing:0.6px;">当前窗口打开</div>
<div class="t" style="left:899px;top:434px;font-size:13px;color:#555;letter-spacing:0.68px;">新窗口打开</div>
<div class="t" style="left:1012px;top:434px;font-size:13px;color:#555;letter-spacing:0.57px;">弹窗打开</div>
<div class="t" style="left:775px;top:474.5px;font-size:13px;color:#555;letter-spacing:0.5px;">携带查询控件条件和联动条件</div>
<div class="t" style="left:997px;top:474.5px;font-size:13px;color:#555;letter-spacing:0.43px;">携带下钻条件</div>
<div class="t" style="left:760px;top:524px;font-size:13px;color:#999;letter-spacing:0.45px;">Tips: 对该图表度量值有影响的条件包括以下提示的相关条件</div>
<div class="t" style="left:747px;top:557px;font-size:13.5px;color:#666;">联动条件:</div>
<div class="t" style="left:818px;top:556.5px;font-size:13px;color:#555;letter-spacing:0.5px;">未设置</div>
<div class="t" style="left:747px;top:587.5px;font-size:13.5px;color:#666;">查询控件:</div>
<div class="t" style="left:814px;top:587.5px;font-size:14px;color:#666;">&gt;=20090114</div>
<div class="t" style="left:917px;top:587.5px;font-size:14px;color:#666;">&lt;=20090124</div>
<div class="t" style="left:747px;top:619px;font-size:13.5px;color:#666;">下钻条件:</div>
<div class="t" style="left:818px;top:618.5px;font-size:13px;color:#555;letter-spacing:0.5px;">未设置</div>
<div class="t" style="left:1268px;top:722px;font-size:13px;color:#555;letter-spacing:5px">取消</div>
<div class="t" style="left:1399px;top:722px;font-size:13px;color:#fff;letter-spacing:5px;font-weight:bold">确定</div></div>
</body></html>
